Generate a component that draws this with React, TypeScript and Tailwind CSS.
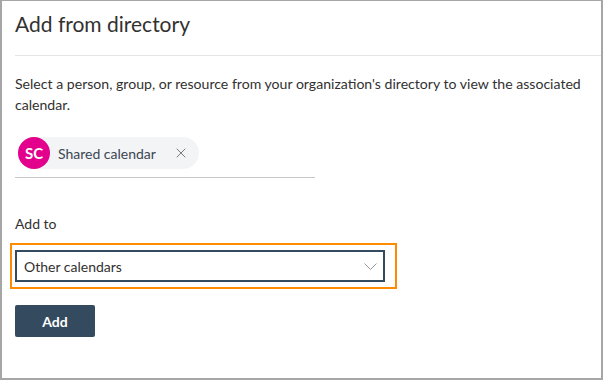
import { X } from "lucide-react";

export default function App() {
    return (
        <div
            className="w-[603px] h-[380px] bg-white border-t border-b-2 border-x-2 border-[#a6a6a6] flex flex-col text-[#323130]"
            style={{ fontFamily: 'Lato, "Noto Sans", sans-serif' }}
        >
            <div className="h-[55px] ml-[13px] border-b border-[#e5e5e5] flex items-center">
                <h1 className="text-[21px] font-normal leading-none -mt-[10px]">Add from directory</h1>
            </div>

            <div className="px-[13px] pt-[17px] flex flex-col">
                <p className="text-[14.1px] leading-[21px] pr-[2px]">
                    Select a person, group, or resource from your organization's directory to view the associated calendar.
                </p>

                <div className="w-[300px] mt-[22px] pb-[8px] border-b border-[#c8c8c8]">
                    <div className="inline-flex items-center h-[32px] rounded-full bg-[#f3f4f6] ml-[3px] pr-[10px]">
                        <div className="w-[32px] h-[32px] rounded-full bg-[#e3008c] flex items-center justify-center text-white text-[15px] font-bold">
                            SC
                        </div>
                        <span className="ml-[8px] text-[14px] text-[#3b4652]">Shared calendar</span>
                        <X className="ml-[17px] w-[16px] h-[16px] text-[#5f6670]" strokeWidth={1.3} />
                    </div>
                </div>

                <label className="mt-[35px] text-[14px] font-normal text-[#323130]">Add to</label>

                <div className="mt-[9px] -ml-[5px] w-[387px] pl-[3px] py-[5px] border-2 border-[#ff8c00]">
                    <div className="w-[370px] h-[32px] border-2 border-[#344a5e] flex items-center justify-between pl-[7px] pr-[6px]">
                        <span className="text-[14px]">Other calendars</span>
                        <svg width="13" height="7" viewBox="0 0 13 7" fill="none">
                            <polyline points="0.5,0.5 6.5,6.5 12.5,0.5" stroke="#9a9a9a" strokeWidth="1" />
                        </svg>
                    </div>
                </div>

                <button className="mt-[16px] w-[80px] h-[32px] rounded-[2px] bg-[#344a5e] text-white text-[14px] font-bold">
                    Add
                </button>
            </div>
        </div>
    );
}
